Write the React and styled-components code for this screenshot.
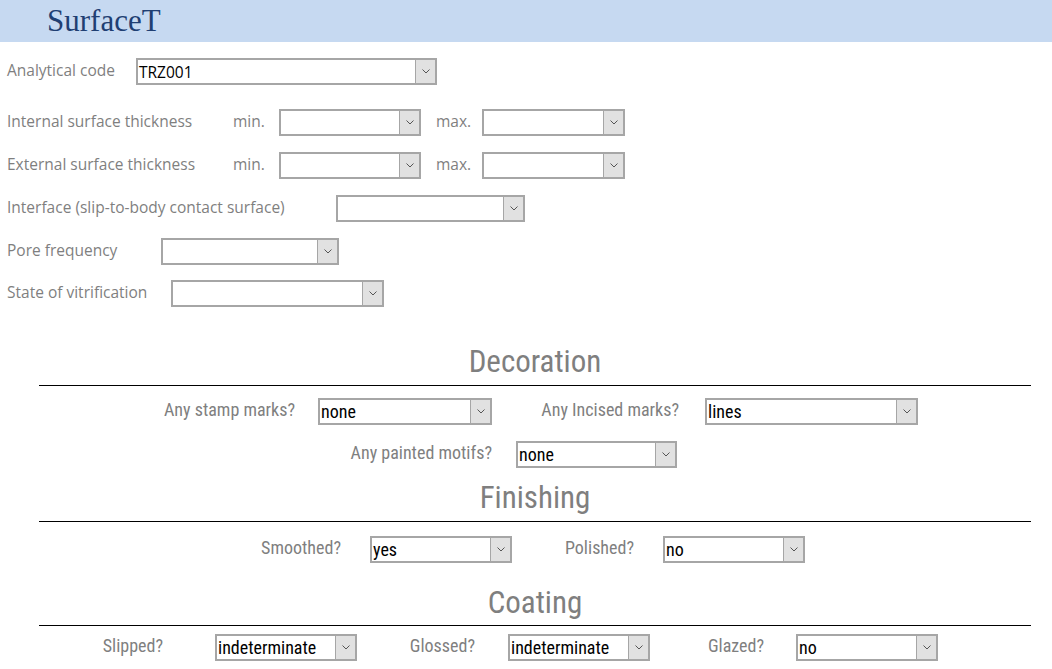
import React from "react";
import styled, { createGlobalStyle } from "styled-components";

const Global = createGlobalStyle`
  html, body { margin: 0; padding: 0; background: #ffffff; }
  body { font-family: "Open Sans", "Noto Sans", sans-serif; }
`;

const NARROW = `"Liberation Sans Narrow", "Roboto Condensed", "Liberation Sans", sans-serif`;

const Page = styled.div`
  width: 1052px;
  height: 669px;
  overflow: hidden;
  background: #fff;
`;

const Header = styled.header`
  height: 42px;
  background: #c6d9f1;
  padding-left: 47px;
  display: flex;
  align-items: center;
`;

const Title = styled.h1`
  margin: 0;
  font-family: "Liberation Serif", "DejaVu Serif", serif;
  font-weight: normal;
  font-size: 31px;
  line-height: 42px;
  color: #1f3f73;
`;

const TopForm = styled.div`
  padding-left: 7px;
  display: flex;
  flex-direction: column;
`;

const Row = styled.div`
  display: flex;
  align-items: center;
  height: 27px;
  margin-top: ${(p) => p.$mt}px;
  padding-left: ${(p) => p.$pl || 0}px;
`;

const Label = styled.span`
  width: ${(p) => p.$w}px;
  flex: none;
  color: #7f7f7f;
  font-size: 15.5px;
  line-height: 20px;
  margin-top: -3px;
  white-space: nowrap;
`;

const CLabel = styled.span`
  width: ${(p) => p.$w}px;
  flex: none;
  text-align: right;
  color: #7f7f7f;
  font-family: ${NARROW};
  font-size: 18px;
  line-height: 20px;
  margin-top: -4px;
  margin-right: ${(p) => p.$gap}px;
  white-space: nowrap;
`;

const Box = styled.div`
  width: ${(p) => p.$w}px;
  height: 27px;
  box-sizing: border-box;
  border: 2px solid #a6a6a6;
  display: flex;
  flex: none;
  background: #fff;
`;

const Value = styled.span`
  flex: 1;
  padding-left: 1px;
  color: #000;
  font-family: ${(p) => (p.$narrow ? NARROW : `"Open Sans", "Noto Sans", sans-serif`)};
  font-size: ${(p) => (p.$narrow ? 18 : 15.5)}px;
  line-height: 24px;
  white-space: nowrap;
  overflow: hidden;
`;

const Arrow = styled.span`
  width: 19px;
  flex: none;
  background: #e1e1e1;
  border-left: 1px solid #a6a6a6;
  display: flex;
  align-items: center;
  justify-content: center;
`;

const Chevron = () => (
  <svg width="8" height="5" viewBox="0 0 8 5">
    <path d="M0.5 0.5 L4 4 L7.5 0.5" fill="none" stroke="#555" strokeWidth="1" />
  </svg>
);

const Select = ({ w, value, narrow }) => (
  <Box $w={w}>
    <Value $narrow={narrow}>{value}</Value>
    <Arrow>
      <Chevron />
    </Arrow>
  </Box>
);

const Section = styled.section`
  margin-left: 39px;
  width: 992px;
`;

const SectionTitle = styled.h2`
  margin: ${(p) => p.$mt}px 0 0 0;
  padding-bottom: ${(p) => p.$pb}px;
  border-bottom: 1px solid #000;
  text-align: center;
  font-family: ${NARROW};
  font-weight: normal;
  font-size: 31px;
  line-height: 30px;
  color: #7f7f7f;
`;

export default function App() {
  return (
    <Page>
      <Global />
      <Header>
        <Title>SurfaceT</Title>
      </Header>
      <TopForm>
        <Row $mt={16}>
          <Label $w={129}>Analytical code</Label>
          <Select w={301} value="TRZ001" />
        </Row>
        <Row $mt={24}>
          <Label $w={226}>Internal surface thickness</Label>
          <Label $w={46}>min.</Label>
          <Select w={142} value="" />
          <Label $w={15} />
          <Label $w={46}>max.</Label>
          <Select w={143} value="" />
        </Row>
        <Row $mt={16}>
          <Label $w={226}>External surface thickness</Label>
          <Label $w={46}>min.</Label>
          <Select w={142} value="" />
          <Label $w={15} />
          <Label $w={46}>max.</Label>
          <Select w={143} value="" />
        </Row>
        <Row $mt={16}>
          <Label $w={329}>Interface (slip-to-body contact surface)</Label>
          <Select w={189} value="" />
        </Row>
        <Row $mt={16}>
          <Label $w={154}>Pore frequency</Label>
          <Select w={178} value="" />
        </Row>
        <Row $mt={15}>
          <Label $w={164}>State of vitrification</Label>
          <Select w={213} value="" />
        </Row>
      </TopForm>

      <Section>
        <SectionTitle $mt={40} $pb={8}>Decoration</SectionTitle>
        <Row $mt={12} $pl={121}>
          <CLabel $w={135} $gap={23}>Any stamp marks?</CLabel>
          <Select w={174} value="none" narrow />
          <CLabel $w={187} $gap={26}>Any Incised marks?</CLabel>
          <Select w={213} value="lines" narrow />
        </Row>
        <Row $mt={16} $pl={261}>
          <CLabel $w={192} $gap={24}>Any painted motifs?</CLabel>
          <Select w={161} value="none" narrow />
        </Row>
      </Section>

      <Section>
        <SectionTitle $mt={15} $pb={8}>Finishing</SectionTitle>
        <Row $mt={14} $pl={180}>
          <CLabel $w={122} $gap={29}>Smoothed?</CLabel>
          <Select w={142} value="yes" narrow />
          <CLabel $w={122} $gap={29}>Polished?</CLabel>
          <Select w={142} value="no" narrow />
        </Row>
      </Section>

      <Section>
        <SectionTitle $mt={25} $pb={7}>Coating</SectionTitle>
        <Row $mt={8} $pl={24}>
          <CLabel $w={100} $gap={52}>Slipped?</CLabel>
          <Select w={142} value="indeterminate" narrow />
          <CLabel $w={118} $gap={33}>Glossed?</CLabel>
          <Select w={142} value="indeterminate" narrow />
          <CLabel $w={114} $gap={32}>Glazed?</CLabel>
          <Select w={142} value="no" narrow />
        </Row>
      </Section>
    </Page>
  );
}
